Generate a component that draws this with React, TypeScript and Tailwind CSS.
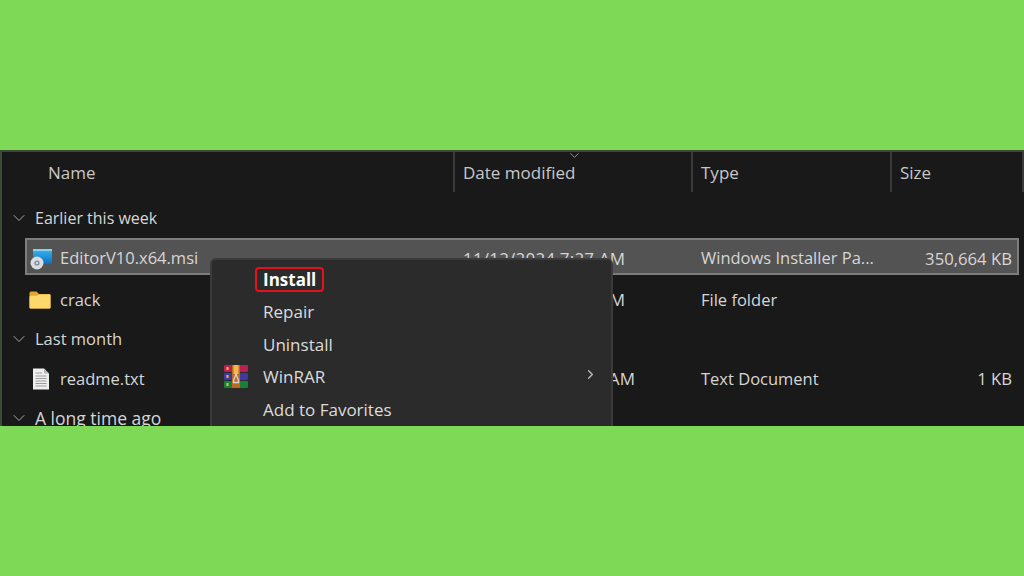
import { ChevronDown, ChevronRight } from 'lucide-react'
import type { ReactNode } from 'react'

const font = { fontFamily: '"Open Sans", "Noto Sans", sans-serif' }

function MsiIcon() {
  return (
    <svg width="23" height="22" viewBox="0 0 23 22" className="shrink-0">
      <defs>
        <linearGradient id="msi-screen" x1="0" y1="0" x2="0" y2="1">
          <stop offset="0" stopColor="#3fb6ea" />
          <stop offset="1" stopColor="#0a6fc4" />
        </linearGradient>
      </defs>
      <rect x="3" y="1" width="19" height="15" fill="url(#msi-screen)" />
      <rect x="3" y="1" width="19" height="2" fill="#7fd4f0" />
      <circle cx="7" cy="15" r="6.5" fill="#d9dde0" />
      <circle cx="7" cy="15" r="2.6" fill="#7d93a5" />
      <circle cx="7" cy="15" r="1" fill="#f4f6f7" />
    </svg>
  )
}

function FolderIcon() {
  return (
    <svg width="22" height="18" viewBox="0 0 22 18" className="shrink-0">
      <path d="M0.5 2 Q0.5 0.5 2 0.5 H7.5 L10 3 H20.5 Q21.5 3 21.5 4 V16.5 Q21.5 17.5 20.5 17.5 H1.5 Q0.5 17.5 0.5 16.5 Z" fill="#e2a92f" />
      <path d="M0.5 6 Q0.5 4.8 2 4.8 H7.5 L10 3.4 H20.5 Q21.5 3.4 21.5 4.4 V16.5 Q21.5 17.5 20.5 17.5 H1.5 Q0.5 17.5 0.5 16.5 Z" fill="#fdd86c" />
    </svg>
  )
}

function TextFileIcon() {
  return (
    <svg width="18" height="22" viewBox="0 0 18 22" className="shrink-0">
      <path d="M1 0.5 H12 L17 5.5 V21.5 H1 Z" fill="#efefef" />
      <path d="M12 0.5 L17 5.5 H12 Z" fill="#b5b5b5" />
      <path d="M3.5 5 H10 M3.5 8 H14.5 M3.5 10.5 H14.5 M3.5 13 H14.5 M3.5 15.5 H14.5 M3.5 18 H14.5" stroke="#9a9a9a" strokeWidth="1" />
    </svg>
  )
}

function WinrarIcon() {
  return (
    <svg width="24" height="23" viewBox="0 0 24 23">
      <rect x="0" y="0" width="24" height="7" rx="1" fill="#b8204f" />
      <rect x="0" y="8" width="24" height="7" rx="1" fill="#43389f" />
      <rect x="0" y="16" width="24" height="7" rx="1" fill="#17803a" />
      <rect x="8" y="0" width="8" height="23" fill="#bd6a1c" />
      <rect x="9.5" y="0" width="5" height="9" fill="#efb94c" />
      <path d="M9.5 15.5 L12 9 L14.5 15.5 V17.5 H9.5 Z" fill="none" stroke="#d8d8d8" strokeWidth="1.3" />
      <rect x="2.5" y="2" width="2" height="3" fill="#e9b949" />
      <rect x="2.5" y="10" width="2" height="3" fill="#e9b949" />
      <rect x="2.5" y="18" width="2" height="3" fill="#e9b949" />
    </svg>
  )
}

function GroupRow({ label, className }: { label: string; className: string }) {
  return (
    <div className={`flex items-center pl-[7px] text-[#d6d6d6] ${className}`}>
      <ChevronDown size={20} strokeWidth={1.2} className="mr-[6px] text-[#a8a8a8]" />
      <span>{label}</span>
    </div>
  )
}

interface FileRowProps {
  icon: ReactNode
  iconClass: string
  name: string
  date: string
  type: string
  size?: string
  selected?: boolean
  className: string
}

function FileRow({ icon, iconClass, name, date, type, size, selected, className }: FileRowProps) {
  return (
    <div
      className={`ml-[23px] mr-[5px] grid grid-cols-[426px_238px_199px_1fr] items-center text-[16.5px] text-[#d6d6d6] ${
        selected ? 'border-2 border-[#7d7d7d] bg-[#535353] pt-[4px]' : 'border-2 border-transparent'
      } ${className}`}
    >
      <div className="flex items-center">
        <div className={`flex w-[33px] ${iconClass}`}>{icon}</div>
        <span>{name}</span>
      </div>
      <div className="pl-[10px] text-[17px] tracking-[0.2px] whitespace-nowrap">{date}</div>
      <div className="pl-[10px] whitespace-nowrap">{type}</div>
      <div className="pr-[5px] text-right text-[16.7px] whitespace-nowrap">{size}</div>
    </div>
  )
}

function MenuItem({ label, bold, children }: { label: string; bold?: boolean; children?: ReactNode }) {
  return (
    <div className="relative flex h-[32.5px] items-center pl-[51px] text-[17px] text-[#dcdcdc]">
      {bold ? (
        <span className="-ml-[8px] rounded-[4px] border-2 border-[#e3121c] px-[6px] leading-[21px] font-bold text-white">{label}</span>
      ) : (
        <span>{label}</span>
      )}
      {children}
    </div>
  )
}

export default function App() {
  return (
    <div className="flex h-[576px] w-[1024px] flex-col justify-center overflow-hidden bg-[#7ed957]" style={font}>
      <div className="relative h-[276px] overflow-hidden border-t-2 border-l-2 border-[#3d4a38] bg-[#191919]">
        {/* column headers */}
        <div className="grid h-[40px] grid-cols-[451px_238px_199px_134px] text-[17px] text-[#c8c8c8]">
          <div className="flex items-center pt-[2px] pl-[46px]">Name</div>
          <div className="relative flex items-center border-l-2 border-[#3a3a3a] pt-[2px] pl-[8px]">
            Date modified
            <ChevronDown size={15} strokeWidth={1.5} className="absolute top-[-4px] left-[112px] text-[#9a9a9a]" />
          </div>
          <div className="flex items-center border-l-2 border-[#3a3a3a] pt-[2px] pl-[8px]">Type</div>
          <div className="flex items-center border-x-2 border-[#3a3a3a] pt-[2px] pl-[8px]">Size</div>
        </div>

        <GroupRow label="Earlier this week" className="mt-[8px] h-[36px] text-[16px]" />
        <FileRow
          selected
          icon={<MsiIcon />}
          iconClass="pl-[3px]"
          name="EditorV10.x64.msi"
          date="11/12/2024 7:27 AM"
          type="Windows Installer Pa..."
          size="350,664 KB"
          className="mt-[2px] h-[37px]"
        />
        <FileRow
          icon={<FolderIcon />}
          iconClass="pl-[2px]"
          name="crack"
          date="11/12/2024 7:27 AM"
          type="File folder"
          className="mt-[7px] h-[36px]"
        />
        <GroupRow label="Last month" className="mt-[3px] h-[36px] text-[16.5px]" />
        <FileRow
          icon={<TextFileIcon />}
          iconClass="pl-[5px]"
          name="readme.txt"
          date="10/15/2024 10:15 AM"
          type="Text Document"
          size="1 KB"
          className="mt-[4px] h-[36px]"
        />
        <GroupRow label="A long time ago" className="mt-[3px] h-[36px] text-[17.5px]" />

        {/* context menu */}
        <div className="absolute top-[106px] left-[208px] h-[180px] w-[403px] rounded-t-[6px] border-2 border-[#3b3b3b] bg-[#2b2b2b] pt-[3px]">
          <MenuItem label="Install" bold />
          <MenuItem label="Repair" />
          <MenuItem label="Uninstall" />
          <MenuItem label="WinRAR">
            <div className="absolute top-[4px] left-[12px]">
              <WinrarIcon />
            </div>
            <ChevronRight size={15} strokeWidth={2} className="absolute top-[6px] left-[371px] text-[#c0c0c0]" />
          </MenuItem>
          <MenuItem label="Add to Favorites" />
        </div>
      </div>
    </div>
  )
}
